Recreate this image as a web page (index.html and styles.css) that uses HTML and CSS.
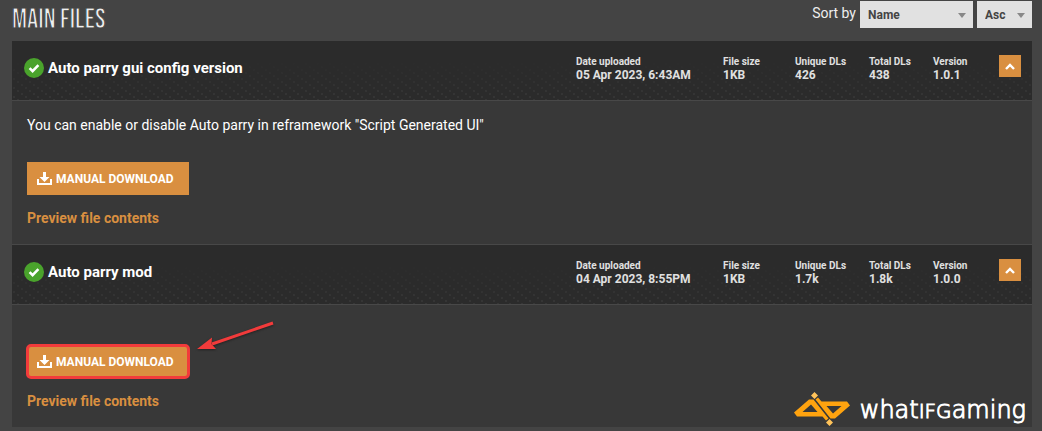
FILE: index.html
```html
<!DOCTYPE html>
<html lang="en">
	<head>
		<meta charset="utf-8">
		<title>Main files</title>
		<link rel="stylesheet" href="styles.css">
	</head>
	<body>
		<!-- shared icons -->
		<svg class="sprite" aria-hidden="true">
			<symbol id="icon-check" viewBox="0 0 20 20">
				<circle cx="10" cy="10" r="10" fill="#4aa32c"/>
				<path d="M5.6 10.2l3 3 5.8-6" fill="none" stroke="#fff" stroke-width="2.6"/>
			</symbol>
			<symbol id="icon-download" viewBox="0 0 15 14">
				<path d="M6 0h3v5h3.5L7.5 10 2.5 5H6z" fill="#fff"/>
				<path d="M1 7v5h13V7" fill="none" stroke="#fff" stroke-width="2"/>
			</symbol>
			<symbol id="icon-up" viewBox="0 0 10 7">
				<path d="M1 6l4-4 4 4" fill="none" stroke="#fff" stroke-width="2.4"/>
			</symbol>
		</svg>

		<div class="page">
			<div class="top-bar">
				<h2>MAIN FILES</h2>
				<div class="sort">
					<label for="sortBy">Sort by</label>
					<div class="select sort-name">
						<select id="sortBy">
							<option>Name</option>
						</select>
					</div>
					<div class="select sort-order">
						<select id="sortOrder" aria-label="Sort order">
							<option>Asc</option>
						</select>
					</div>
				</div>
			</div>

			<div class="file-list">
				<div class="file-header">
					<svg class="check"><use href="#icon-check"/></svg>
					<h3>Auto parry gui config version</h3>
					<dl class="stats">
						<div><dt>Date uploaded</dt><dd>05 Apr 2023, 6:43AM</dd></div>
						<div><dt>File size</dt><dd>1KB</dd></div>
						<div><dt>Unique DLs</dt><dd>426</dd></div>
						<div><dt>Total DLs</dt><dd>438</dd></div>
						<div><dt>Version</dt><dd>1.0.1</dd></div>
					</dl>
					<button class="toggle" type="button" aria-label="Collapse"><svg><use href="#icon-up"/></svg></button>
				</div>
				<div class="file-body">
					<p>You can enable or disable Auto parry in reframework "Script Generated UI"</p>
					<button class="download" type="button"><svg><use href="#icon-download"/></svg>MANUAL DOWNLOAD</button>
					<a class="preview" href="#">Preview file contents</a>
				</div>

				<div class="file-header">
					<svg class="check"><use href="#icon-check"/></svg>
					<h3>Auto parry mod</h3>
					<dl class="stats">
						<div><dt>Date uploaded</dt><dd>04 Apr 2023, 8:55PM</dd></div>
						<div><dt>File size</dt><dd>1KB</dd></div>
						<div><dt>Unique DLs</dt><dd>1.7k</dd></div>
						<div><dt>Total DLs</dt><dd>1.8k</dd></div>
						<div><dt>Version</dt><dd>1.0.0</dd></div>
					</dl>
					<button class="toggle" type="button" aria-label="Collapse"><svg><use href="#icon-up"/></svg></button>
				</div>
				<div class="file-body no-text">
					<div class="marked">
						<button class="download" type="button"><svg><use href="#icon-download"/></svg>MANUAL DOWNLOAD</button>
						<svg class="arrow" viewBox="0 0 80 34">
							<path d="M76 4L15 25" fill="none" stroke="#f23b3b" stroke-width="3"/>
							<path d="M0 30L15 18.5 14.5 25 19 30z" fill="#f23b3b"/>
						</svg>
					</div>
					<a class="preview" href="#">Preview file contents</a>
				</div>
			</div>

			<div class="brand">
				<svg viewBox="0 0 56 34">
					<g fill="#ffa30f" fill-rule="evenodd">
						<path d="M15 7.500H19.500L34.500 26.500 32 28.500 28.500 24.500H3L0 20.500zM17 12.500L8.500 20H23.500z"/>
						<path d="M41 26.500H36.500L21.500 7.500 24 5.500 27.500 9.500H53L56 13.500zM39 21.500L47.500 14H32.500z"/>
					</g>
					<path d="M20.500 0l3.500 3.500-3.500 3.500-3.500-3.500zM35.500 27l3.500 3.500-3.500 3.500-3.500-3.500z" fill="#ffc35a"/>
				</svg>
				<span>what<span class="caps">ifg</span>aming</span>
			</div>
		</div>
	</body>
</html>
```
FILE: styles.css
```css
*{
	margin: 0;
	padding: 0;
	box-sizing: border-box;
}
body{
	background-color: #444;
	color: #fff;
	font-family: Roboto, "Liberation Sans", sans-serif;
	font-size: 14px;
	line-height: 20px;
}
svg{
	display: block;
}
.sprite{
	display: none;
}
button{
	border: 0;
	background-color: #d98f40;
	color: #fff;
	font-family: inherit;
	cursor: pointer;
}
.page{
	position: relative;
	padding: 0 10px 4px 12px;
}

/* title and sorting */
.top-bar{
	display: flex;
	justify-content: space-between;
	align-items: flex-start;
	height: 41px;
}
h2{
	padding-top: 6px;
	font-family: "Bebas Neue", "Roboto Condensed", Roboto, sans-serif;
	font-size: 28px;
	font-weight: 100;
	line-height: 28px;
	color: #eee;
	/* thins the letters down */
	-webkit-text-stroke: 1px #444;
}
.sort{
	display: flex;
	gap: 4px;
	padding-top: 1px;
}
.sort label{
	line-height: 25px;
	color: #eee;
}
.select{
	position: relative;
}
.select::after{
	content: "";
	position: absolute;
	top: 12px;
	right: 7px;
	border: 4px solid transparent;
	border-top: 5px solid #888;
	border-bottom: 0;
	pointer-events: none;
}
.select select{
	width: 100%;
	height: 27px;
	padding: 0 8px;
	border: 0;
	border-radius: 0;
	appearance: none;
	background-color: #e1e1e1;
	color: #444;
	font: 700 12px Roboto, sans-serif;
}
.sort-name{
	width: 113px;
}
.sort-order{
	width: 55px;
}

/* files */
.file-header{
	display: flex;
	height: 60px;
	padding: 0 11px 0 12px;
	border-bottom: 1px solid #484848;
	background-color: #2b2b2b;
	background-image:
		linear-gradient(#2b2b2b 20px, transparent),
		radial-gradient(circle at 2px 2px, #363636 1px, transparent 1px),
		radial-gradient(circle at 6px 5px, #363636 1px, transparent 1px),
		radial-gradient(circle at 10px 8px, #363636 1px, transparent 1px);
	background-size: auto, 12px 9px, 12px 9px, 12px 9px;
}
.check{
	width: 20px;
	height: 20px;
	margin: 17px 4px 0 0;
}
h3{
	flex: 1;
	padding-top: 17px;
	font-size: 15px;
	font-weight: 700;
}
.stats{
	display: grid;
	grid-template-columns: 147px 72px 74px 64px 66px;
	padding-top: 14px;
	color: #e0e0e0;
	font-weight: 700;
}
.stats dt{
	font-size: 10px;
	line-height: 13px;
}
.stats dd{
	font-size: 12px;
	line-height: 14px;
}
.toggle{
	display: flex;
	justify-content: center;
	align-items: center;
	width: 22px;
	height: 22px;
	margin-top: 14px;
}
.toggle svg{
	width: 10px;
	height: 7px;
}
.file-body{
	padding: 14px 15px 16px;
	background-color: #383838;
}
.file-body + .file-header{
	height: 61px;
	border-top: 1px solid #484848;
}
.file-body.no-text{
	padding-top: 40px;
}
.file-body p{
	margin-bottom: 27px;
}
.download{
	display: flex;
	align-items: center;
	gap: 4px;
	min-width: 162px;
	height: 33px;
	padding: 0 10px;
	font-size: 12px;
	font-weight: 700;
}
.download svg{
	width: 15px;
	height: 14px;
}
.preview{
	display: block;
	width: fit-content;
	margin-top: 13px;
	color: #d98f40;
	font-weight: 700;
	text-decoration: none;
}

/* highlighted button */
.marked{
	position: relative;
	width: fit-content;
}
.marked .download{
	border-radius: 4px;
	outline: 3px solid #f23b3b;
	outline-offset: -2px;
}
.arrow{
	position: absolute;
	left: 170px;
	top: -26px;
	width: 80px;
	height: 34px;
	filter: drop-shadow(0 1px 1px #222);
}

.brand{
	position: absolute;
	right: 16px;
	bottom: 5px;
	display: flex;
	align-items: center;
	gap: 10px;
	font-family: "DejaVu Sans", sans-serif;
	font-size: 24px;
	font-weight: 200;
	-webkit-text-stroke: 1px #fff;
}
.brand svg{
	width: 56px;
	height: 34px;
}
.caps{
	font-size: 28px;
	font-variant: small-caps;
}
```
